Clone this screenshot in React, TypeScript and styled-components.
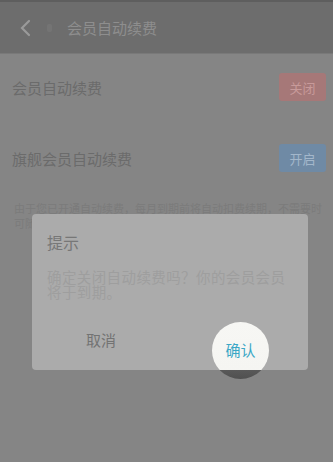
import React from 'react'
import styled, { createGlobalStyle } from 'styled-components'

const Global = createGlobalStyle`
  html, body {
    margin: 0;
    padding: 0;
    background: #858585;
  }
  body {
    font-family: "Noto Sans CJK SC", "Noto Sans", sans-serif;
  }
`

const S = {
  Page: styled.div`
    position: relative;
    width: 333px;
    height: 462px;
    overflow: hidden;
    background: #858585;
  `,
  Header: styled.div`
    height: 51px;
    border-top: 2px solid #5e5e5e;
    background: #6d6d6d;
    display: flex;
    align-items: center;
    padding-left: 19px;
    gap: 14px;
    border-bottom: 1px solid #797979;
  `,
  Back: styled.div`
    width: 14px;
    height: 20px;
    display: flex;
    align-items: center;
  `,
  Dot: styled.div`
    width: 5px;
    height: 8px;
    border-radius: 2px;
    background: #747474;
  `,
  Title: styled.div`
    font-size: 15px;
    color: #8e8e8e;
    margin-left: 1px;
  `,
  Row: styled.div<{ $h: number }>`
    height: ${p => p.$h}px;
    display: flex;
    align-items: center;
    justify-content: space-between;
    padding: 0 7px 0 12px;
  `,
  RowText: styled.div`
    font-size: 15px;
    color: #6b6b6b;
  `,
  Toggle: styled.div<{ $bg: string; $fg: string }>`
    width: 47px;
    height: 28px;
    border-radius: 3px;
    background: ${p => p.$bg};
    color: ${p => p.$fg};
    font-size: 13px;
    display: flex;
    align-items: center;
    justify-content: center;
  `,
  Note: styled.div`
    margin-top: 5px;
    padding: 0 10px 0 14px;
    font-size: 11px;
    line-height: 15px;
    color: #7b7b7b;
  `,
  Dialog: styled.div`
    position: absolute;
    left: 32px;
    top: 214px;
    width: 276px;
    height: 156px;
    border-radius: 4px;
    background: #ababab;
    display: flex;
    flex-direction: column;
  `,
  DialogTitle: styled.div`
    padding: 17px 0 0 15px;
    font-size: 16px;
    line-height: 22px;
    color: #777777;
  `,
  Message: styled.div`
    padding: 16px 14px 0 15px;
    font-size: 14.5px;
    line-height: 15px;
    color: #9e9e9e;
    letter-spacing: 0.4px;
  `,
  Buttons: styled.div`
    margin-top: auto;
    height: 62px;
    display: flex;
  `,
  Btn: styled.div<{ $color: string }>`
    position: relative;
    flex: 1;
    display: flex;
    align-items: center;
    justify-content: center;
    font-size: 15px;
    color: ${p => p.$color};
  `,
  Glow: styled.div`
    position: absolute;
    left: 42px;
    top: 14px;
    width: 57px;
    height: 57px;
    border-radius: 50%;
    background: linear-gradient(to bottom, #f7f7f4 0, #f5f5f2 48px, #595959 48px, #505050 100%);
    display: flex;
    align-items: center;
    justify-content: center;
    padding-bottom: 2px;
    box-sizing: border-box;
    color: #3aa7c6;
    font-size: 15px;
  `,
}

export default function App() {
  return (
    <S.Page>
      <Global />
      <S.Header>
        <S.Back>
          <svg width="12" height="20" viewBox="0 0 12 20">
            <path d="M10 3 L3 10 L10 17" fill="none" stroke="#9a9a9a" strokeWidth="2.2" strokeLinecap="round" />
          </svg>
        </S.Back>
        <S.Dot />
        <S.Title>会员自动续费</S.Title>
      </S.Header>
      <S.Row $h={66}>
        <S.RowText>会员自动续费</S.RowText>
        <S.Toggle $bg="#a67878" $fg="#c89a9a">关闭</S.Toggle>
      </S.Row>
      <S.Row $h={76}>
        <S.RowText>旗舰会员自动续费</S.RowText>
        <S.Toggle $bg="#6f8aa5" $fg="#a3b7cb">开启</S.Toggle>
      </S.Row>
      <S.Note>由于您已开通自动续费，每月到期前将自动扣费续期，不需要时可随时关闭自动续费功能。</S.Note>
      <S.Dialog>
        <S.DialogTitle>提示</S.DialogTitle>
        <S.Message>确定关闭自动续费吗？你的会员会员将于到期。</S.Message>
        <S.Buttons>
          <S.Btn $color="#737373">取消</S.Btn>
          <S.Btn $color="#3aa7c6">
            <S.Glow>确认</S.Glow>
          </S.Btn>
        </S.Buttons>
      </S.Dialog>
    </S.Page>
  )
}
